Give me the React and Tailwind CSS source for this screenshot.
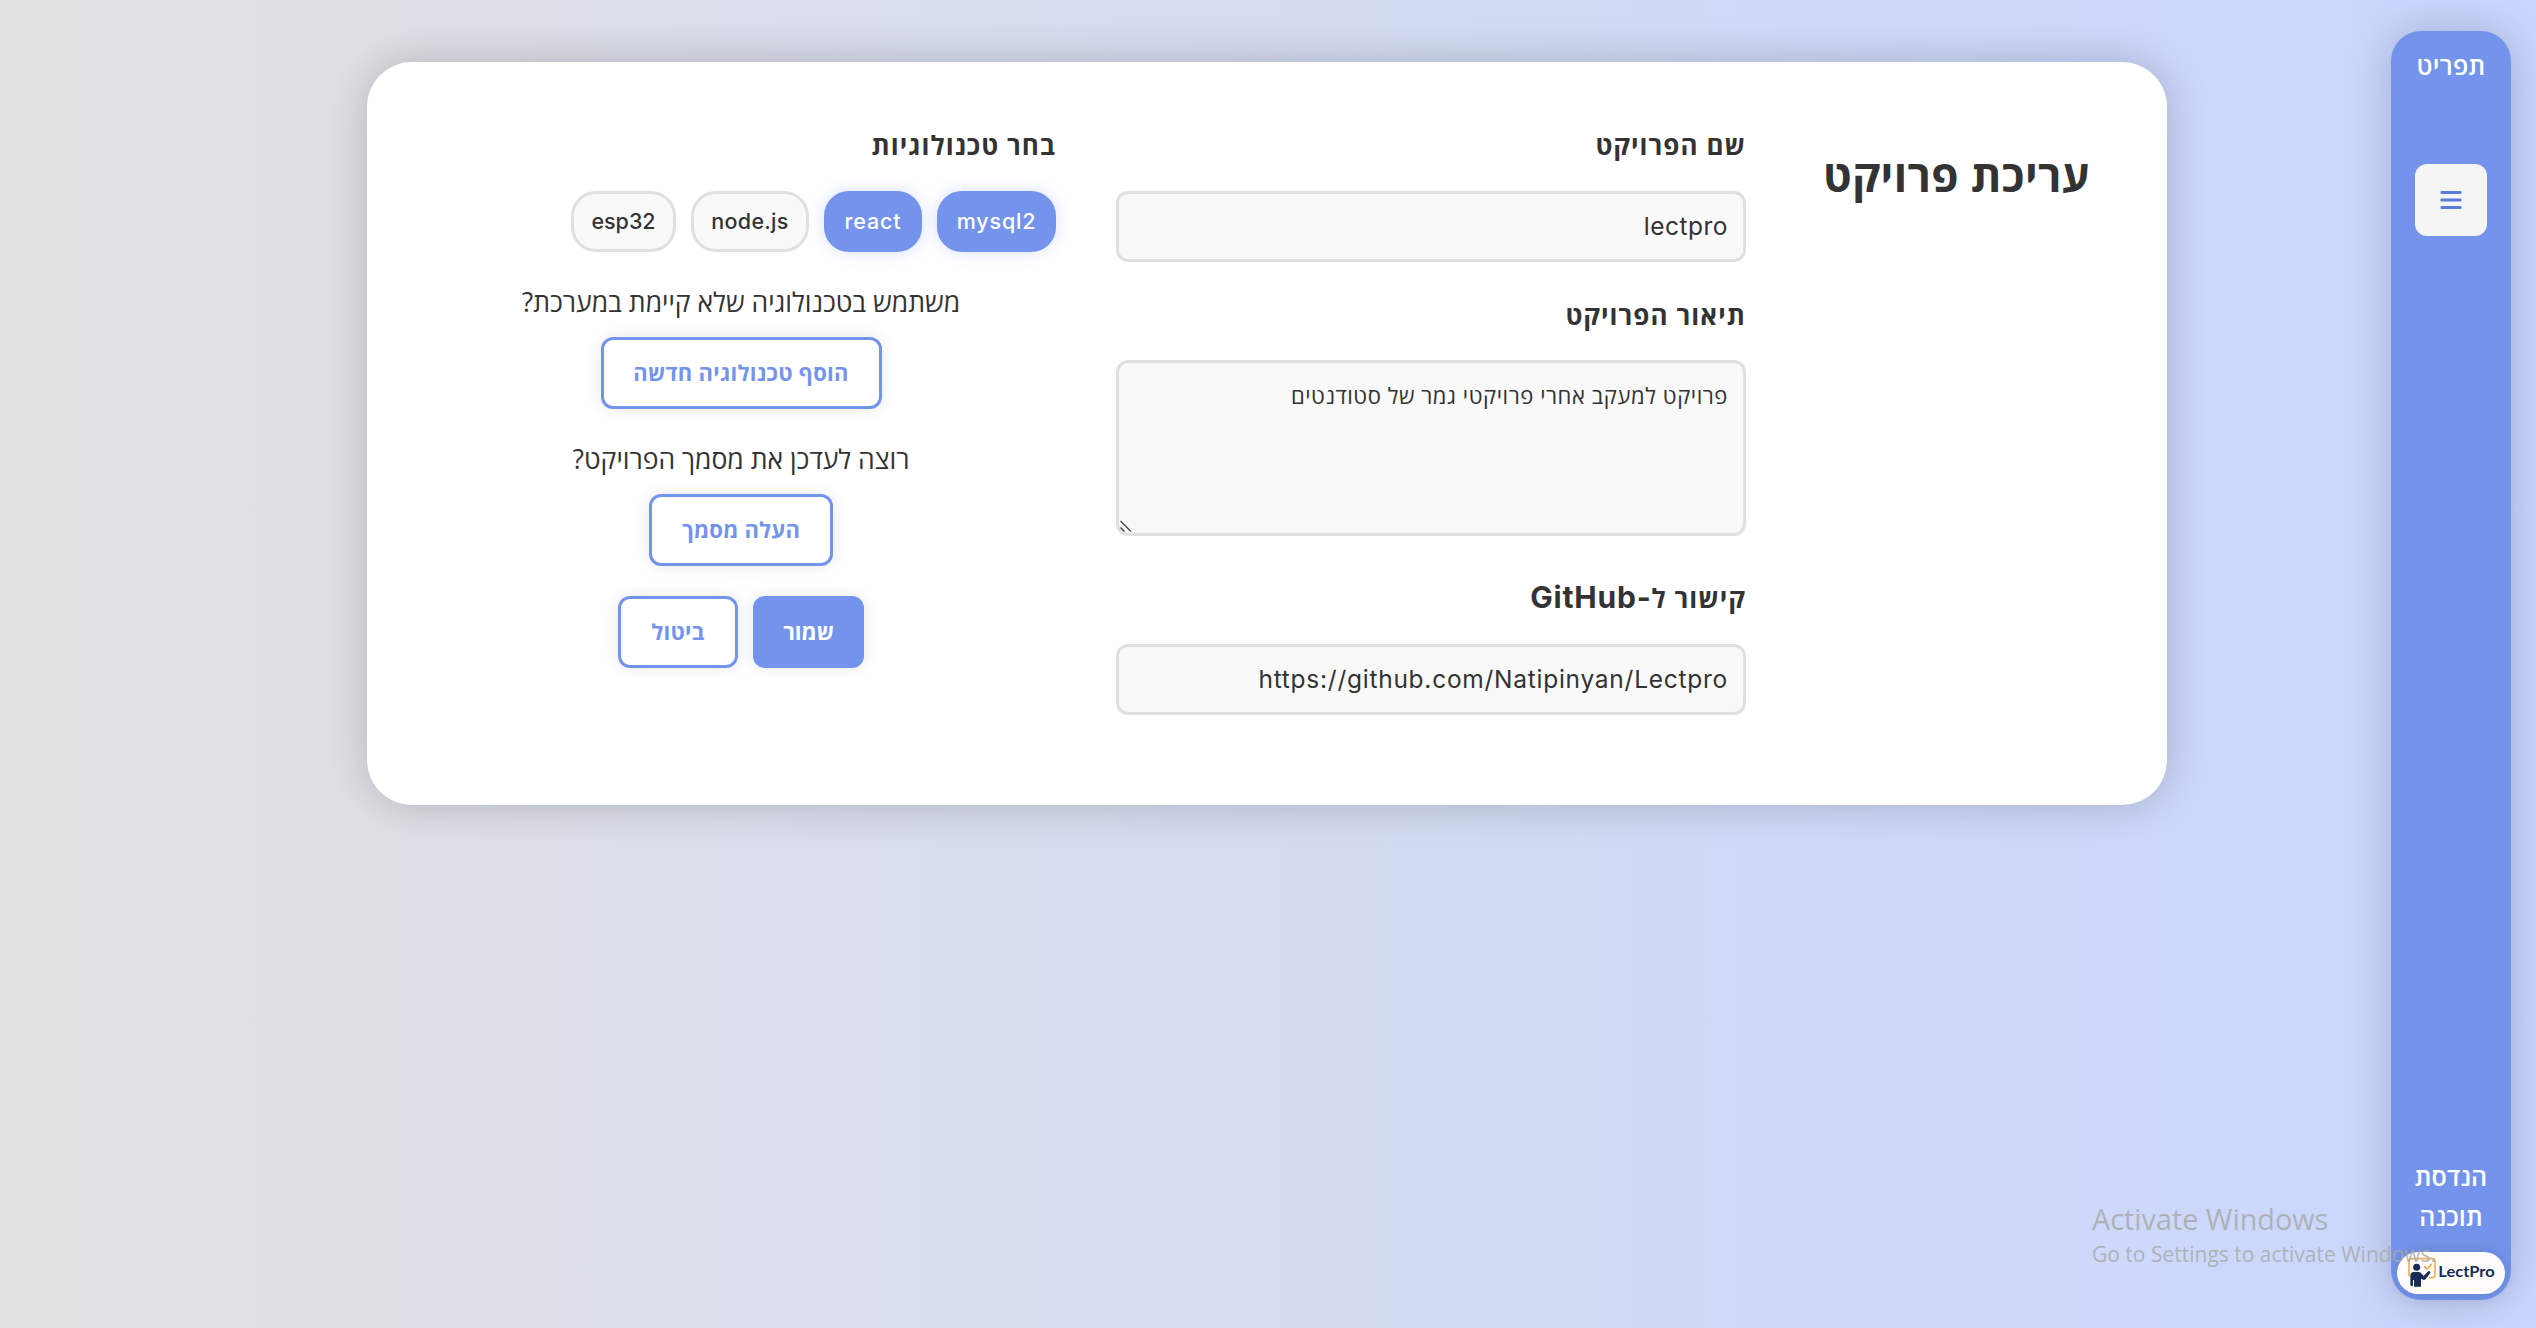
import React from "react";

const technologies = [
  { name: "mysql2", selected: true, fit: "w-[119px] tracking-[0.85px]" },
  { name: "react", selected: true, fit: "w-[98px] tracking-[0.9px]" },
  { name: "node.js", selected: false, fit: "w-[118px] tracking-[0.3px]" },
  { name: "esp32", selected: false, fit: "w-[105px] tracking-[0px]" },
];

const inputClass =
  "block w-full rounded-[12px] border-[3px] border-[#e0e0e0] bg-[#f9f9f9] px-[15px] text-right text-[#333] outline-none";

function Label({ children, className = "" }) {
  return (
    <label className={`block h-10 text-[26px] leading-10 font-bold tracking-[1.05px] whitespace-nowrap text-[#333] ${className}`}>
      {children}
    </label>
  );
}

function Button({ primary, className, children }) {
  return (
    <button
      className={`flex h-[72px] items-center justify-center rounded-[12px] border-[3px] border-[#7494ec] pb-px text-[22px] font-bold whitespace-nowrap shadow-[0_0_15px_rgba(0,0,0,0.1)] ${
        primary ? "bg-[#7494ec] text-white" : "bg-white text-[#7494ec]"
      } ${className}`}
    >
      {children}
    </button>
  );
}

function Question({ children }) {
  return (
    <p className="mt-[30px] mb-[15px] text-center text-[26.5px] leading-10 whitespace-nowrap text-[#333]">{children}</p>
  );
}

function Logo() {
  return (
    <div className="h-[42px] w-[108px] overflow-hidden rounded-full bg-[#fdfcfb] shadow-[0_0_15px_rgba(0,0,0,0.15)]">
      <svg viewBox="36 36 324 126" width="108" height="42" direction="ltr">
        <path d="M72 108V64q0-8 8-8h62q8 0 8 8v42q0 7-7 7h-9" fill="none" stroke="#eeb15c" strokeWidth="5" strokeLinecap="round" />
        <path d="M119 80l7 7 13-14" fill="none" stroke="#eba94c" strokeWidth="5" strokeLinecap="round" strokeLinejoin="round" />
        <circle cx="95" cy="82" r="10.5" fill="#182c55" />
        <path
          d="M76 134V107q0-11 11-11h14q6 0 9 5l6 7 12-13q3-3 6-1t2 5l-14 18q-5 5-10 1l-4-2v24H87v-20h-3v14q-1 5-4 5t-4-5z"
          fill="#182c55"
        />
        <text x="160" y="110" fill="#182c55" fontFamily="Lato, sans-serif" fontWeight="700" fontSize="46" textLength="169" lengthAdjust="spacingAndGlyphs">
          LectPro
        </text>
      </svg>
    </div>
  );
}

function Sidebar() {
  return (
    <aside className="mt-[31px] mr-[25px] flex h-[1269px] w-[120px] shrink-0 flex-col items-center rounded-[30px] bg-[#7494ec] pt-[14px] pb-[6px] text-[25px] leading-10 text-white shadow-[0_0_45px_rgba(0,0,0,0.2)]">
      <span className="font-semibold tracking-[0.3px]">תפריט</span>
      <button className="mt-[79px] flex size-[72px] items-center justify-center rounded-[12px] bg-[#f5f5f5]">
        <svg width="22" height="18" viewBox="0 0 22 18" fill="#5a7bdb">
          <rect x="0.5" y="0" width="21" height="3" rx="1.2" />
          <rect x="0.5" y="7.5" width="21" height="3" rx="1.2" />
          <rect x="0.5" y="15" width="21" height="3" rx="1.2" />
        </svg>
      </button>
      <div className="mt-auto mb-4 text-center font-semibold tracking-[0.1px]">
        <div>הנדסת</div>
        <div>תוכנה</div>
      </div>
      <Logo />
    </aside>
  );
}

export default function App() {
  return (
    <div
      dir="rtl"
      className="relative flex h-[1328px] w-full items-start overflow-hidden bg-linear-to-r from-[#e2e2e2] to-[#c9d6ff] font-['Open_Sans','Noto_Sans',sans-serif]"
    >
      <Sidebar />

      <main className="mt-[62px] mr-[224px] flex h-[743px] w-[1800px] shrink-0 gap-[60px] rounded-[45px] bg-white px-[60px] pt-[63px] shadow-[0_0_45px_rgba(0,0,0,0.2)]">
        <h1 className="mt-[20px] w-[301px] shrink-0 text-center text-[44px] leading-[60px] font-bold tracking-[0.4px] whitespace-nowrap text-[#333]">
          עריכת פרויקט
        </h1>

        <section className="w-[630px] shrink-0">
          <Label>שם הפרויקט</Label>
          <input
            dir="rtl"
            defaultValue="lectpro"
            className={`${inputClass} mt-[26px] h-[71px] pb-px font-['Inter',sans-serif] text-[24.5px] tracking-[0.5px]`}
          />
          <Label className="mt-[33px]">תיאור הפרויקט</Label>
          <div className="relative mt-[25px]">
            <textarea
              dir="rtl"
              defaultValue="פרויקט למעקב אחרי פרויקטי גמר של סטודנטים"
              className={`${inputClass} h-[176px] resize-none pt-4 text-[22px] leading-[33px] tracking-[0.57px]`}
            />
            <svg className="absolute bottom-[4px] left-[4px]" width="12" height="12" viewBox="0 0 12 12" stroke="#4a4a4a" strokeWidth="1.5">
              <path d="M0.5 1L11 11.5M0.5 7.5L4.5 11.5" />
            </svg>
          </div>
          <Label className="mt-[42px]">
            קישור ל<span className="font-['Inter',sans-serif] text-[30px] leading-none tracking-[0.8px]">-GitHub</span>
          </Label>
          <input
            dir="rtl"
            defaultValue="https://github.com/Natipinyan/Lectpro"
            className={`${inputClass} mt-[26px] h-[71px] pb-px font-['Inter',sans-serif] text-[24.5px] tracking-[0.74px]`}
          />
        </section>

        <section className="flex w-[630px] shrink-0 flex-col items-center">
          <Label className="self-start">בחר טכנולוגיות</Label>
          <div className="mt-[26px] flex gap-[15px] self-start">
            {technologies.map((t) => (
              <span
                key={t.name}
                className={`flex h-[61px] items-center justify-center rounded-[25px] border-[3px] font-['Inter',sans-serif] text-[21.5px] font-medium ${
                  t.selected
                    ? "border-[#7494ec] bg-[#7494ec] text-white shadow-[0_0_15px_rgba(116,148,236,0.3)]"
                    : "border-[#e0e0e0] bg-[#f9f9f9] text-[#333]"
                } ${t.fit}`}
              >
                {t.name}
              </span>
            ))}
          </div>
          <Question>משתמש בטכנולוגיה שלא קיימת במערכת?</Question>
          <Button className="w-[281px] tracking-[0.3px]">הוסף טכנולוגיה חדשה</Button>
          <Question>רוצה לעדכן את מסמך הפרויקט?</Question>
          <Button className="w-[184px] tracking-[0.2px]">העלה מסמך</Button>
          <div className="mt-[30px] flex gap-[15px]">
            <Button primary className="w-[111px]">שמור</Button>
            <Button className="w-[120px] tracking-[0.3px]">ביטול</Button>
          </div>
        </section>
      </main>

      <div dir="ltr" className="pointer-events-none absolute top-[1199px] left-[2092px] whitespace-nowrap text-[rgba(170,170,170,0.85)]">
        <div className="text-[28.8px] leading-10">Activate Windows</div>
        <div className="mt-px text-[21px] leading-7">Go to Settings to activate Windows.</div>
      </div>
    </div>
  );
}
